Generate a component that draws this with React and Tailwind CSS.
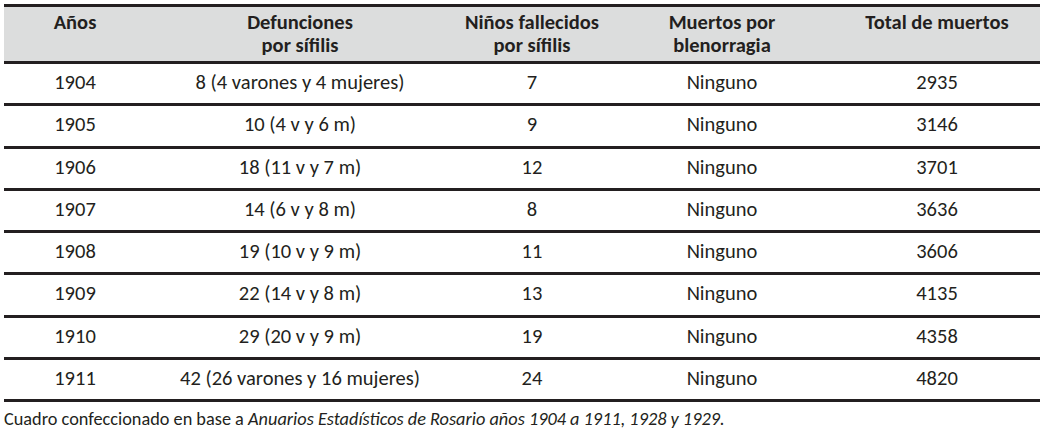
import React from "react";

const rows = [
  ["1904", "8 (4 varones y 4 mujeres)", "7", "Ninguno", "2935"],
  ["1905", "10 (4 v y 6 m)", "9", "Ninguno", "3146"],
  ["1906", "18 (11 v y 7 m)", "12", "Ninguno", "3701"],
  ["1907", "14 (6 v y 8 m)", "8", "Ninguno", "3636"],
  ["1908", "19 (10 v y 9 m)", "11", "Ninguno", "3606"],
  ["1909", "22 (14 v y 8 m)", "13", "Ninguno", "4135"],
  ["1910", "29 (20 v y 9 m)", "19", "Ninguno", "4358"],
  ["1911", "42 (26 varones y 16 mujeres)", "24", "Ninguno", "4820"],
];

const cols = "grid grid-cols-[142px_308px_156px_224px_206px]";

const App = () => {
  return (
    <div
      className="w-[1044px] h-[434px] bg-white text-[#231f20] pt-[4px] pl-[4px]"
      style={{ fontFamily: '"Carlito", "Open Sans", sans-serif' }}
    >
      <div className="w-[1036px] border-t-[3px] border-[#231f20]">
        {/* header */}
        <div className={`${cols} h-[57px] bg-[#dcdddd] border-b-[3px] border-[#231f20] font-bold text-[20.5px] leading-[23px] pt-[4px]`}>
          <div className="text-center">Años</div>
          <div className="text-center">Defunciones<br />por sífilis</div>
          <div className="text-center">Niños fallecidos<br />por sífilis</div>
          <div className="text-center">Muertos por<br />blenorragia</div>
          <div className="text-center">Total de muertos</div>
        </div>

        {rows.map((r) => (
          <div key={r[0]} className={`${cols} h-[42.25px] border-b-[3px] border-[#231f20] items-center pb-[3px] text-[20.5px] leading-[24px]`}>
            {r.map((c, i) => (
              <div key={i} className="text-center">{c}</div>
            ))}
          </div>
        ))}
      </div>

      <p className="mt-[6px] text-[18.3px] leading-[22px]">
        Cuadro confeccionado en base a{" "}
        <i>Anuarios Estadísticos de Rosario años 1904 a 1911, 1928 y 1929.</i>
      </p>
    </div>
  );
};

export default App;
